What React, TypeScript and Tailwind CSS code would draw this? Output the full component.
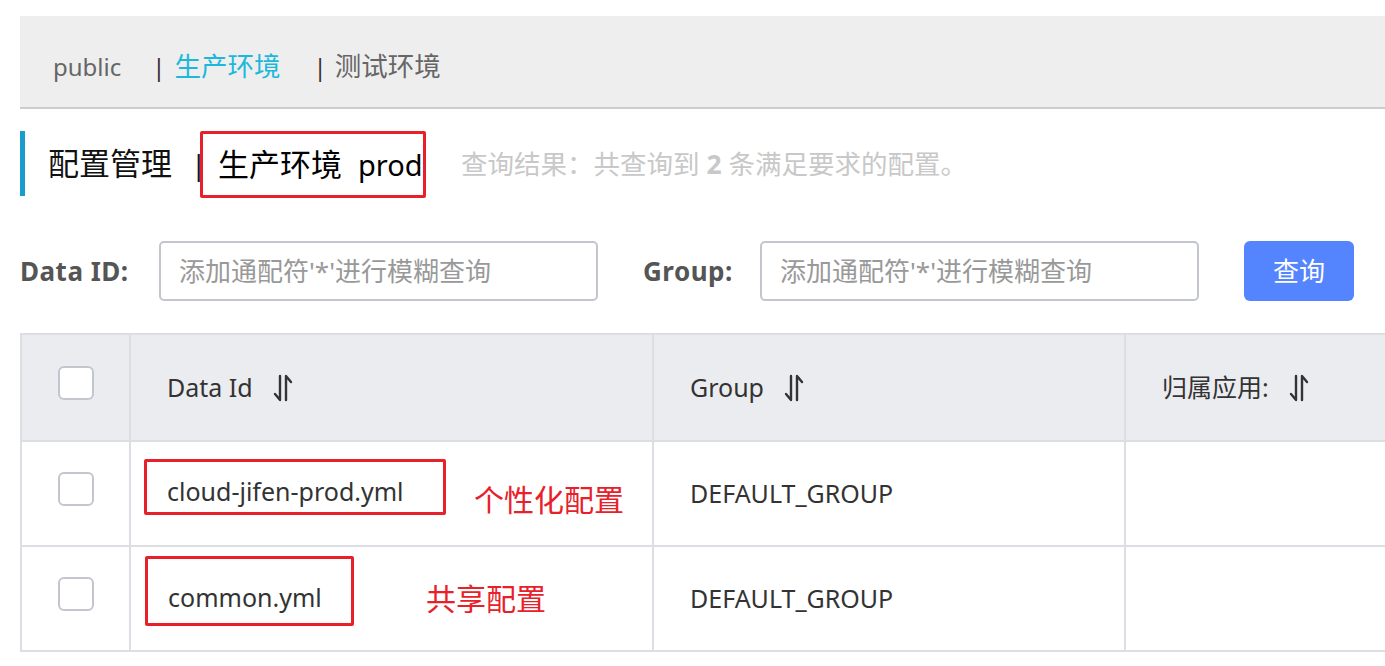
const font = { fontFamily: '"Noto Sans", "Noto Sans CJK SC", sans-serif' };

function SortIcon() {
    return (
        <svg width="24" height="28" viewBox="0 0 24 28" fill="none" stroke="#333" strokeWidth="2.4" strokeLinecap="round" strokeLinejoin="round" className="ml-[18px] shrink-0">
            <path d="M9 2 V26 L4 20" />
            <path d="M15 26 V2 L20 8" />
        </svg>
    );
}

function Checkbox() {
    return <div className="w-[36px] h-[34px] mb-[10px] rounded-[6px] border-2 border-[#c4c6cf] bg-white" />;
}

const rows = [
    { id: 'cloud-jifen-prod.yml', group: 'DEFAULT_GROUP', note: '个性化配置', box: 'w-[302px] h-[56px] -mt-[14px] pb-[1px]', noteClass: 'ml-[28px] mt-[12px]' },
    { id: 'common.yml', group: 'DEFAULT_GROUP', note: '共享配置', box: 'w-[209px] h-[70px] -mt-[16px] ml-[1px] pb-[6px]', noteClass: 'ml-[72px]' },
];

export default function App() {
    return (
        <div className="w-[1385px] h-[666px] overflow-hidden bg-white pt-[16px] pl-[20px]" style={font}>
            {/* env tabs */}
            <div className="h-[93px] bg-[#eeeeee] border-b-2 border-[#cccccc] flex items-center pl-[33px] pt-[10px] text-[26.5px] text-[#666] whitespace-nowrap">
                <span className="text-[24px]">public</span>
                <span className="ml-[31px] text-[#333] text-[24px]">|</span>
                <span className="ml-[9px] text-[#1bb8dc]">生产环境</span>
                <span className="ml-[33px] text-[#333] text-[24px]">|</span>
                <span className="ml-[8px]">测试环境</span>
            </div>

            {/* title */}
            <div className="mt-[22px] flex items-start h-[67px] whitespace-nowrap">
                <div className="w-[5px] h-[65px] bg-[#1a9ccc] shrink-0" />
                <div className="ml-[23px] h-[65px] flex items-center text-[31px] text-[#111]">配置管理</div>
                <div className="ml-[19px] w-[9px] h-[65px] flex items-center text-[28px] text-[#111]">|</div>
                <div className="w-[226px] h-[67px] shrink-0 border-[3px] border-[#e8202a] rounded-[2px] flex items-center pl-[15px] text-[31px] text-[#000]">
                    生产环境<span className="ml-[16px] text-[29px]">prod</span>
                </div>
                <div className="ml-[35px] h-[67px] flex items-center text-[26.5px] text-[#c8c8c8]">
                    查询结果：共查询到&nbsp;<b className="font-bold">2</b>&nbsp;条满足要求的配置。
                </div>
            </div>

            {/* search */}
            <div className="mt-[43px] flex items-center h-[60px] whitespace-nowrap">
                <div className="w-[139px] text-[26px] font-bold text-[#555] tracking-[0.5px]">Data ID:</div>
                <div className="w-[439px] h-[60px] rounded-[5px] border-2 border-[#c4c6cf] flex items-center pl-[18px] text-[26px] text-[#999]">
                    添加通配符'*'进行模糊查询
                </div>
                <div className="ml-[45px] w-[117px] text-[26px] font-bold text-[#555] tracking-[0.5px]">Group:</div>
                <div className="w-[439px] h-[60px] rounded-[5px] border-2 border-[#c4c6cf] flex items-center pl-[18px] text-[26px] text-[#999]">
                    添加通配符'*'进行模糊查询
                </div>
                <button className="ml-[45px] w-[110px] h-[60px] rounded-[6px] bg-[#5584ff] text-white text-[26px]">查询</button>
            </div>

            {/* table */}
            <div className="mt-[32px] w-[1500px] border-2 border-[#dcdee3] text-[25px] text-[#333] whitespace-nowrap">
                <div className="flex h-[105px] bg-[#ebecf0]">
                    <div className="w-[109px] flex items-center justify-center border-r-2 border-[#dcdee3]">
                        <Checkbox />
                    </div>
                    <div className="w-[523px] flex items-center pl-[36px] border-r-2 border-[#dcdee3]">
                        Data Id <SortIcon />
                    </div>
                    <div className="w-[472px] flex items-center pl-[36px] border-r-2 border-[#dcdee3]">
                        Group <SortIcon />
                    </div>
                    <div className="flex-1 flex items-center pl-[36px]">
                        归属应用: <SortIcon />
                    </div>
                </div>
                {rows.map((row) => (
                    <div key={row.id} className="flex h-[105px] border-t-2 border-[#dcdee3] bg-white">
                        <div className="w-[109px] flex items-center justify-center border-r-2 border-[#dcdee3]">
                            <Checkbox />
                        </div>
                        <div className="w-[523px] flex items-center pl-[13px] border-r-2 border-[#dcdee3]">
                            <div className={`${row.box} shrink-0 border-[3px] border-[#e8202a] rounded-[2px] flex items-end pl-[20px]`}>
                                {row.id}
                            </div>
                            <div className={`${row.noteClass} text-[30px] text-[#e8202a]`}>{row.note}</div>
                        </div>
                        <div className="w-[472px] flex items-center pl-[36px] border-r-2 border-[#dcdee3]">
                            {row.group}
                        </div>
                        <div className="flex-1" />
                    </div>
                ))}
            </div>
        </div>
    );
}
